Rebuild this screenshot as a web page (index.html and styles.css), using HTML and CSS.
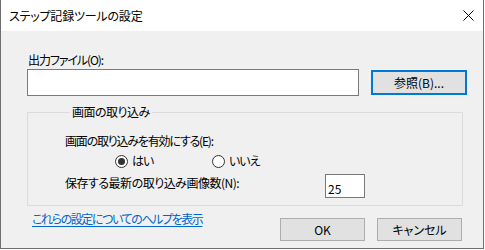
FILE: index.html
```html
<!DOCTYPE html>
<html lang="ja">
<head>
<meta charset="utf-8">
<link rel="stylesheet" href="styles.css">
</head>
<body>
<div class="window">
  <div class="titlebar">
    <span class="title">ステップ記録ツールの設定</span>
    <svg class="close" width="11" height="11" viewBox="0 0 11 11"><path d="M0.5 0.5L10.5 10.5M10.5 0.5L0.5 10.5" stroke="#000" stroke-width="1" fill="none"/></svg>
  </div>
  <div class="content">
    <div class="field-label">出力ファイル(O):</div>
    <div class="file-row">
      <div class="textbox wide"></div>
      <div class="btn default">参照(B)...</div>
    </div>
    <fieldset class="group">
      <legend>画面の取り込み</legend>
      <div class="line">画面の取り込みを有効にする(E):</div>
      <div class="radios">
        <span class="radio first"><span class="circle checked"></span>はい</span>
        <span class="radio"><span class="circle"></span>いいえ</span>
      </div>
      <div class="count-row">
        <span class="count-label">保存する最新の取り込み画像数(N):</span>
        <div class="textbox num">25</div>
      </div>
    </fieldset>
    <div class="footer">
      <a class="help">これらの設定についてのヘルプを表示</a>
      <div class="buttons">
        <div class="btn">OK</div>
        <div class="btn">キャンセル</div>
      </div>
    </div>
  </div>
</div>
</body>
</html>
```
FILE: styles.css
```css
html, body {
  margin: 0;
  padding: 0;
  background: #ffffff;
}
body {
  font-family: "Noto Sans CJK JP", "Noto Sans", sans-serif;
  font-size: 12px;
  line-height: 16px;
  color: #000;
  font-feature-settings: "palt";
}
.window {
  width: 484px;
  height: 249px;
  box-sizing: border-box;
  border: 1px solid #6e6e6e;
  border-top: none;
  background: #f0f0f0;
  overflow: hidden;
}
.titlebar {
  height: 31px;
  background: #ffffff;
  display: flex;
  align-items: center;
  justify-content: space-between;
  padding-left: 8px;
}
.title {
  letter-spacing: -0.2px;
}
.close {
  margin-right: 9px;
  display: block;
}
.content {
  padding: 21px 0 0 26px;
}
.field-label {
  padding-left: 1px;
  letter-spacing: -1.1px;
}
.file-row {
  display: flex;
  align-items: flex-start;
  margin-top: 1px;
}
.textbox {
  background: #fff;
  border: 1px solid #7a7a7a;
  box-sizing: border-box;
}
.wide {
  width: 332px;
  height: 27px;
}
.btn {
  box-sizing: border-box;
  background: #e1e1e1;
  border: 1px solid #adadad;
  display: flex;
  align-items: center;
  justify-content: center;
  width: 85px;
  height: 23px;
}
.btn.default {
  width: 96px;
  height: 25px;
  margin-left: 12px;
  margin-top: 1px;
  border: 2px solid #0078d7;
}
.group {
  margin: 8px 0 0 0;
  width: 436px;
  box-sizing: border-box;
  border: 1px solid #dcdcdc;
  padding: 13px 0 7px 37px;
}
.group legend {
  padding: 0 2px;
  margin-left: 5px;
  line-height: 16px;
  letter-spacing: -0.5px;
}
.line {
  letter-spacing: -1.2px;
}
.radios {
  display: flex;
  align-items: center;
  margin-top: 4px;
  height: 16px;
}
.radio {
  display: flex;
  align-items: center;
  letter-spacing: -1px;
}
.radio.first {
  margin-left: 50px;
  width: 97px;
}
.circle {
  width: 13px;
  height: 13px;
  box-sizing: border-box;
  border: 1px solid #333;
  border-radius: 50%;
  background: #fff;
  margin-right: 4px;
  display: flex;
  align-items: center;
  justify-content: center;
}
.circle.checked::after {
  content: "";
  width: 7px;
  height: 7px;
  border-radius: 50%;
  background: #333;
}
.count-row {
  display: flex;
  align-items: flex-start;
  margin-top: 5px;
}
.count-label {
  width: 260px;
  padding-top: 1px;
  letter-spacing: -0.5px;
}
.num {
  width: 40px;
  height: 24px;
  padding: 6px 0 0 2px;
  line-height: 16px;
}
.footer {
  display: flex;
  align-items: flex-start;
  width: 435px;
  margin-top: 5px;
}
.help {
  margin-left: 5px;
  color: #0066cc;
  text-decoration: underline;
  text-underline-offset: 2px;
  letter-spacing: -1.4px;
}
.buttons {
  margin-left: auto;
  margin-top: 7px;
  display: flex;
  gap: 12px;
}
```
